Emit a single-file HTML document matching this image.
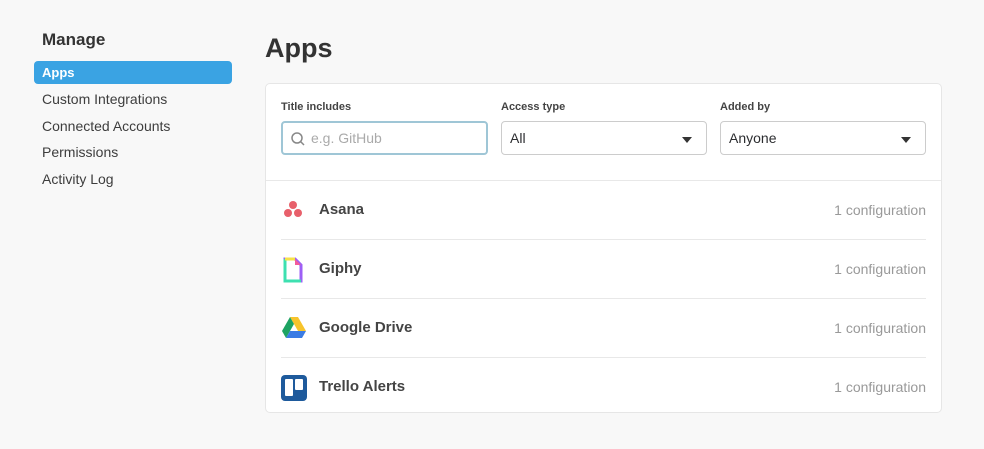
<!DOCTYPE html>
<html><head><style>
body{margin:0;width:984px;height:449px;background:#f8f8f8;font-family:"Liberation Sans",sans-serif;color:#2c2d30;position:relative;overflow:hidden}
.a{position:absolute}
.nav{left:42px;font-size:14px;color:#3d3d3d}
.card{left:265px;top:83px;width:675px;height:328px;background:#fff;border:1px solid #e6e6e6;border-radius:5px}
.lbl{font-size:11px;font-weight:bold;color:#444}
.box{height:34px;border:1px solid #ccc;border-radius:4px;box-sizing:border-box;font-size:14px;line-height:32px;padding-left:8px;background:#fff}
.tri{position:absolute;right:14px;top:15px;width:0;height:0;border-left:5px solid transparent;border-right:5px solid transparent;border-top:6px solid #333}
.row{left:15px;width:645px;height:58px;border-bottom:1px solid #e8e8e8}
.row .n{position:absolute;left:38px;top:20px;font-size:15px;font-weight:bold;color:#444}
.row .c{position:absolute;right:0;top:21px;font-size:14px;color:#999}
.row svg{position:absolute;left:0;top:17px}
</style></head><body>
<div class="a" style="left:42px;top:30px;font-size:17px;font-weight:bold;color:#333">Manage</div>
<div class="a" style="left:34px;top:61px;width:198px;height:23px;background:#3aa3e3;border-radius:4px"></div>
<div class="a nav" style="top:65px;color:#fff;font-weight:bold;font-size:13px">Apps</div>
<div class="a nav" style="top:91px">Custom Integrations</div>
<div class="a nav" style="top:118px">Connected Accounts</div>
<div class="a nav" style="top:144px">Permissions</div>
<div class="a nav" style="top:171px">Activity Log</div>
<div class="a" style="left:265px;top:33px;font-size:27px;font-weight:bold;color:#333">Apps</div>
<div class="a card">
<div class="a lbl" style="left:15px;top:17px">Title includes</div>
<div class="a lbl" style="left:235px;top:17px">Access type</div>
<div class="a lbl" style="left:454px;top:17px">Added by</div>
<div class="a box" style="left:15px;top:37px;width:207px;border:2px solid #9fc6d6;line-height:30px;color:#aaa;padding-left:28px">e.g. GitHub
<svg class="a" style="left:7px;top:8px" width="16" height="16"><circle cx="7" cy="7" r="5" fill="none" stroke="#888" stroke-width="1.5"/><line x1="10.5" y1="10.5" x2="14" y2="14" stroke="#888" stroke-width="1.5"/></svg></div>
<div class="a box" style="left:235px;top:37px;width:206px">All<div class="tri"></div></div>
<div class="a box" style="left:454px;top:37px;width:206px">Anyone<div class="tri"></div></div>
<div class="a" style="left:0;top:96px;width:675px;border-top:1px solid #e8e8e8"></div>
<div class="a row" style="top:97px"><svg width="24" height="24"><circle cx="12" cy="7" r="4" fill="#e8606b"/><circle cx="7" cy="15" r="4" fill="#e8606b"/><circle cx="17" cy="15" r="4" fill="#e8606b"/></svg><div class="n">Asana</div><div class="c">1 configuration</div></div>
<div class="a row" style="top:156px"><svg width="24" height="26"><path d="M4 2H14L20 8V24H4Z" fill="none" stroke="#9d5ff6" stroke-width="3"/><path d="M4 2V24H20" fill="none" stroke="#3de0b0" stroke-width="3"/><path d="M4 2H14" stroke="#f6e14a" stroke-width="3"/><path d="M14 2V8H20" fill="#f25b9b"/></svg><div class="n">Giphy</div><div class="c">1 configuration</div></div>
<div class="a row" style="top:215px"><svg width="26" height="24"><path d="M9 1H17L25 15H17Z" fill="#f7c42c"/><path d="M9 1L1 15L5 22L13 8Z" fill="#1da362"/><path d="M5 22H21L25 15H9Z" fill="#3b7ce4"/></svg><div class="n">Google Drive</div><div class="c">1 configuration</div></div>
<div class="a row" style="top:274px;border:0"><svg width="26" height="26"><rect x="0" y="0" width="26" height="26" rx="4" fill="#1e5a9c"/><rect x="4" y="4" width="8" height="17" rx="1" fill="#fff"/><rect x="14" y="4" width="8" height="11" rx="1" fill="#fff"/></svg><div class="n">Trello Alerts</div><div class="c">1 configuration</div></div>
</div>
</body></html>
